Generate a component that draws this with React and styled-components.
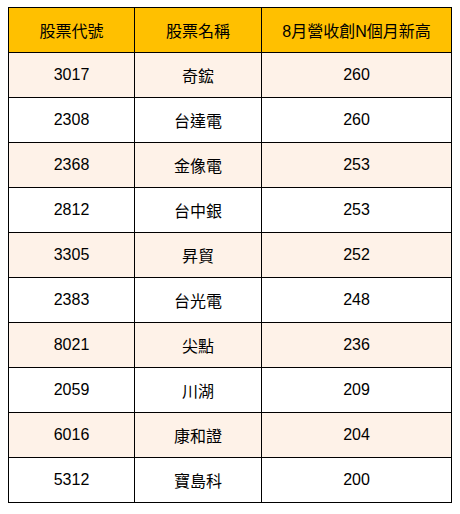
import React from 'react';
import styled, { createGlobalStyle } from 'styled-components';

const GlobalStyle = createGlobalStyle`
  body {
    margin: 0;
    background: #fff;
    font-family: "Liberation Sans", Arial, "Noto Sans CJK TC", sans-serif;
  }
`;

const Wrapper = styled.div`
  padding: 7px 8px;
`;

const Table = styled.table`
  border-collapse: collapse;
  width: 444px;
  table-layout: fixed;
  color: #000;
  font-size: 16px;
`;

const HeadCell = styled.th`
  background: #ffc000;
  border: 1px solid #000;
  height: 44px;
  padding: 0;
  font-weight: normal;
  text-align: center;
`;

const Row = styled.tr`
  background: ${(p) => (p.$shaded ? '#fef2e8' : '#fff')};
`;

const Cell = styled.td`
  border: 1px solid #000;
  height: 44px;
  padding: 0;
  text-align: center;
`;

const rows = [
  ['3017', '奇鋐', '260'],
  ['2308', '台達電', '260'],
  ['2368', '金像電', '253'],
  ['2812', '台中銀', '253'],
  ['3305', '昇貿', '252'],
  ['2383', '台光電', '248'],
  ['8021', '尖點', '236'],
  ['2059', '川湖', '209'],
  ['6016', '康和證', '204'],
  ['5312', '寶島科', '200'],
];

const App = () => (
  <>
    <GlobalStyle />
    <Wrapper>
      <Table>
        <colgroup>
          <col style={{ width: 126 }} />
          <col style={{ width: 127 }} />
          <col />
        </colgroup>
        <thead>
          <tr>
            <HeadCell>股票代號</HeadCell>
            <HeadCell>股票名稱</HeadCell>
            <HeadCell>8月營收創N個月新高</HeadCell>
          </tr>
        </thead>
        <tbody>
          {rows.map((r, i) => (
            <Row key={r[0]} $shaded={i % 2 === 0}>
              <Cell>{r[0]}</Cell>
              <Cell>{r[1]}</Cell>
              <Cell>{r[2]}</Cell>
            </Row>
          ))}
        </tbody>
      </Table>
    </Wrapper>
  </>
);

export default App;
